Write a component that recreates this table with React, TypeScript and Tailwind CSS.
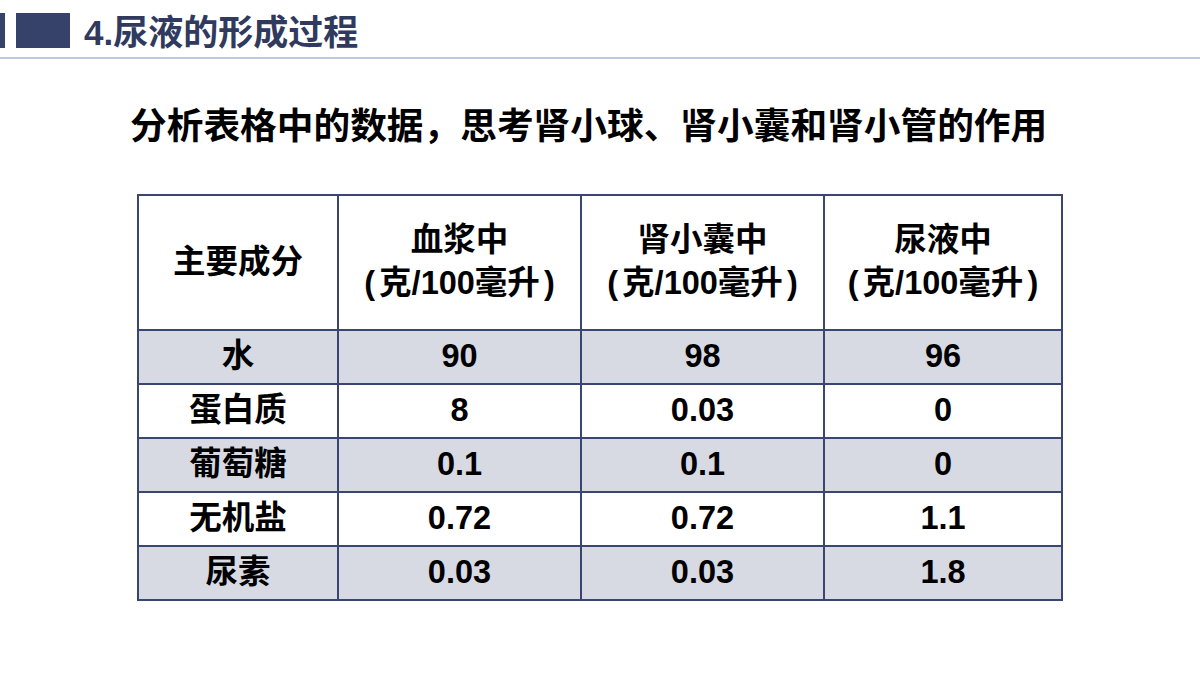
import React from 'react';

const rows = [
  { name: '水', a: '90', b: '98', c: '96', shaded: true },
  { name: '蛋白质', a: '8', b: '0.03', c: '0', shaded: false },
  { name: '葡萄糖', a: '0.1', b: '0.1', c: '0', shaded: true },
  { name: '无机盐', a: '0.72', b: '0.72', c: '1.1', shaded: false },
  { name: '尿素', a: '0.03', b: '0.03', c: '1.8', shaded: true },
];

const font = { fontFamily: '"Liberation Sans", "Noto Sans CJK SC", sans-serif' };

// unit line under each column heading
const Unit = () => (
  <>
    <span className="mr-[4px]">(</span>克/100毫升<span className="ml-[4px]">)</span>
  </>
);

const App: React.FC = () => {
  return (
    <div className="w-[1200px] h-[675px] bg-white overflow-hidden" style={font}>
      {/* Header bar */}
      <header className="h-[59px] border-b-2 border-[#c1c7dd] flex items-start pt-[13px]">
        <div className="w-[5px] h-[35px] bg-[#36426a]" />
        <div className="w-[54px] h-[35px] bg-[#36426a] ml-[11px]" />
        <h1 className="ml-[14px] text-[35px] font-bold text-[#2f3a5e] leading-[40px]">
          4.尿液的形成过程
        </h1>
      </header>

      {/* Question */}
      <h2 className="mt-[50px] ml-[130px] text-[36.7px] font-bold text-black leading-none">
        分析表格中的数据，思考肾小球、肾小囊和肾小管的作用
      </h2>

      {/* Data table */}
      <table className="mt-[48px] ml-[137px] w-[926px] border-collapse text-black font-bold text-[32.5px]">
        <thead>
          <tr className="h-[135px] bg-white">
            <th className="w-[200px] border-2 border-[#3a4570]">主要成分</th>
            <th className="w-[243px] border-2 border-[#3a4570] leading-[43px]">
              血浆中<br /><Unit />
            </th>
            <th className="w-[243px] border-2 border-[#3a4570] leading-[43px]">
              肾小囊中<br /><Unit />
            </th>
            <th className="border-2 border-[#3a4570] leading-[43px]">
              尿液中<br /><Unit />
            </th>
          </tr>
        </thead>
        <tbody>
          {rows.map((r) => (
            <tr key={r.name} className={`h-[54px] leading-none ${r.shaded ? 'bg-[#d7dae3]' : 'bg-white'}`}>
              <td className="border-2 border-[#3a4570] text-center">{r.name}</td>
              <td className="border-2 border-[#3a4570] text-center">{r.a}</td>
              <td className="border-2 border-[#3a4570] text-center">{r.b}</td>
              <td className="border-2 border-[#3a4570] text-center">{r.c}</td>
            </tr>
          ))}
        </tbody>
      </table>
    </div>
  );
};

export default App;
